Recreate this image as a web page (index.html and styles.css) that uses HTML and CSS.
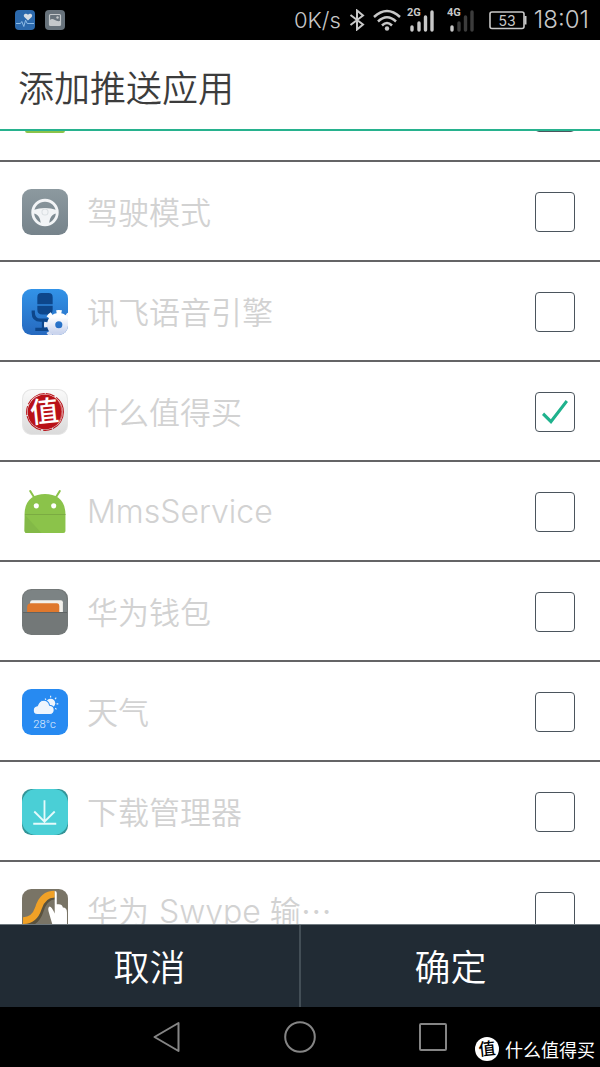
FILE: index.html
```html
<!DOCTYPE html>
<html lang="zh-CN">
<head>
<meta charset="utf-8">
<meta name="viewport" content="width=device-width, initial-scale=1">
<title>添加推送应用</title>
<link rel="stylesheet" href="styles.css">
</head>
<body>
<div class="screen">
  <div class="status">
    <div class="status-group notices">
      <svg class="notice" viewBox="0 0 20 20" aria-hidden="true"><rect width="20" height="20" rx="4" fill="#2c69ac"/><path d="M13 10.500 9.300 7C7.500 4.500 11 2.500 13 4.700c2-2.200 5.400-.2 3.700 2.300z" fill="#d5dce4"/><path d="M1 13.500h4.500l1.300-2 2 5 1.800-6.300 1.600 3.300H19" fill="none" stroke="#8ebbe6" stroke-width="1"/></svg>
      <svg class="notice" viewBox="0 0 20 20" aria-hidden="true"><rect width="20" height="20" rx="4" fill="#67727b"/><rect x="4.500" y="4.500" width="11" height="11" rx="1" fill="none" stroke="#c4c8cb" stroke-width="1.200"/><path d="M5 10c3-3 5 2 10 1v4H5z" fill="#c4c8cb"/><circle cx="12.500" cy="7.500" r="1.200" fill="#c4c8cb"/></svg>
    </div>
    <div class="status-group">
      <span class="status-text">0K/s</span>
      <svg class="bluetooth" viewBox="0 0 16 22" aria-hidden="true"><path d="M1.500 6 14 15.500 8 20.500V1.500L14 6.500 1.500 16" fill="none" stroke="#c8c8c8" stroke-width="2"/></svg>
      <svg class="wifi" viewBox="0 0 28 22" aria-hidden="true"><g fill="none" stroke="#c8c8c8" stroke-width="2.500"><path d="M1 8q13-12 26 0"/><path d="M5 12.500q9-8.500 18 0"/><path d="M9 16.500q5-5 10 0"/></g><circle cx="14" cy="19.500" r="2.200" fill="#c8c8c8"/></svg>
      <svg class="signal" viewBox="0 0 30 26" aria-hidden="true"><text class="net" x="0" y="10">2G</text><path d="M5 21v3M12 17v7M18.500 11v13M25 6v18" stroke="#c8c8c8" stroke-width="3.400" stroke-linecap="round"/></svg>
      <svg class="signal second" viewBox="0 0 30 26" aria-hidden="true"><text class="net" x="0" y="10">4G</text><path d="M5 21v3" stroke="#c8c8c8" stroke-width="3.400" stroke-linecap="round"/><path d="M12 17v7M18.500 11v13M25 6v18" stroke="#3c3c3c" stroke-width="3.400" stroke-linecap="round"/></svg>
      <svg class="battery" viewBox="0 0 38 20" aria-hidden="true"><rect x="1" y="2" width="34" height="16.500" rx="2" fill="none" stroke="#c8c8c8" stroke-width="1.600"/><path d="M36.500 6v8.500" stroke="#c8c8c8" stroke-width="2"/><text class="charge" x="18" y="15.500">53</text></svg>
      <span class="status-text clock">18:01</span>
    </div>
  </div>

  <header class="header"><h1 class="title">添加推送应用</h1></header>

  <main class="viewport">
    <div class="list">
      <label class="row">
        <svg class="icon" viewBox="0 0 45 45" aria-hidden="true"><path d="M3 23h39v18q0 2-2 2H5q-2 0-2-2z" fill="#8bc34a"/></svg>
        <span class="name"></span><input class="check" type="checkbox">
      </label>
      <label class="row">
        <svg class="icon" viewBox="0 0 45 45" aria-hidden="true"><defs><linearGradient id="steel" x2="0" y2="1"><stop stop-color="#8c999f"/><stop offset="1" stop-color="#76838b"/></linearGradient></defs><rect width="45" height="45" rx="9" fill="url(#steel)"/><circle cx="22.500" cy="23" r="12" fill="none" stroke="#f2f4f6" stroke-width="2.800"/><path d="M11 20.500q11.500-4 23 0v3.500c-5 .5-7 4-7.500 11h-8c-.5-7-2.500-10.500-7.500-11z" fill="#f2f4f6"/><circle cx="22.500" cy="22.500" r="3" fill="none" stroke="#dadfe2" stroke-width="1"/></svg>
        <span class="name">驾驶模式</span><input class="check" type="checkbox">
      </label>
      <label class="row">
        <svg class="icon" viewBox="0 0 45 45" aria-hidden="true"><defs><linearGradient id="blue" x2="0" y2="1"><stop stop-color="#3293e8"/><stop offset="1" stop-color="#2669bf"/></linearGradient><linearGradient id="gear" x2="0" y2="1"><stop stop-color="#fff"/><stop offset="1" stop-color="#cbd5ee"/></linearGradient><clipPath id="tile"><rect width="45" height="45" rx="9"/></clipPath></defs><g clip-path="url(#tile)"><rect width="45" height="45" fill="url(#blue)"/><path d="M15 15V8q0-4 4-4h7q4 0 4 4v7zM15 16.500h15V20q0 5-5 5h-5q-5 0-5-5z" fill="#0d468b"/><path d="M11 21v2q0 7.500 7 7.500h8M21 30v8M13 39.500h14" fill="none" stroke="#0d468b" stroke-width="3.200"/><circle cx="36" cy="35" r="12" fill="none" stroke="url(#gear)" stroke-width="5" stroke-dasharray="4.700 4.725" transform="rotate(-12 36 35)"/><circle cx="36" cy="35" r="7.500" fill="none" stroke="url(#gear)" stroke-width="8"/></g></svg>
        <span class="name">讯飞语音引擎</span><input class="check" type="checkbox">
      </label>
      <label class="row">
        <svg class="icon" viewBox="0 0 45 45" aria-hidden="true"><defs><linearGradient id="paper" x2="0" y2="1"><stop stop-color="#fafafa"/><stop offset="1" stop-color="#dadada"/></linearGradient></defs><rect x=".5" y=".5" width="44" height="44" rx="9" fill="url(#paper)" stroke="#e5e5e5"/><circle cx="22.500" cy="22.500" r="17" fill="#b91118"/><circle cx="22.500" cy="22.500" r="18" fill="none" stroke="#b91118" stroke-width="1" stroke-dasharray="20 1 9 2"/><path d="M36 12q6 10 0 21" fill="none" stroke="#e28b8b" stroke-width=".7"/><text class="stamp" x="22" y="32" transform="rotate(-6 22 23)">值</text></svg>
        <span class="name">什么值得买</span><input class="check" type="checkbox" checked>
      </label>
      <label class="row">
        <svg class="icon" viewBox="0 0 45 45" aria-hidden="true"><path d="m8 2 5 8M37 2l-5 8" stroke="#8bc34a" stroke-width="2" stroke-linecap="round"/><path d="M2.500 25C2.500 11 11 5 22.500 5s20 6 20 20v16q0 2-2 2h-36q-2 0-2-2z" fill="#8bc34a"/><path d="M3 25.500 19 43H4.500q-2 0-2-2z" fill="#83b947"/><path d="M3 25h39.500" stroke="#7bab42"/><circle cx="14" cy="16.500" r="2.500" fill="#fff"/><circle cx="31" cy="16.500" r="2.500" fill="#fff"/></svg>
        <span class="name"><span class="latin">MmsService</span></span><input class="check" type="checkbox">
      </label>
      <label class="row">
        <svg class="icon" viewBox="0 0 45 45" aria-hidden="true"><rect width="45" height="45" rx="9" fill="#737878"/><path d="M1 22.500h43V14q0-13-9-13H10Q1 1 1 10z" fill="#7c8384"/><path d="M8 15v-2q0-2 2-2h28q2 0 2 2v10H8z" fill="#f2f1ec"/><path d="M5 23v-5q0-4 4-4h25q2.500 0 2.500 3v6z" fill="#df782d"/><path d="M1 23h43" stroke="#5f6464"/></svg>
        <span class="name">华为钱包</span><input class="check" type="checkbox">
      </label>
      <label class="row">
        <svg class="icon" viewBox="0 0 45 45" aria-hidden="true"><rect width="45" height="45" rx="9" fill="#278af1"/><circle cx="28" cy="14" r="4.500" fill="#eef5fd"/><path d="m22.500 9.500 1 1M28 6.500v1.700M33.500 8.500l-1.200 1.300M35.500 14.500h-1.700M33.700 20l-1.200-1.200" stroke="#eef5fd" stroke-width="1.100"/><path d="M15 25q-4 0-4-4t4-4.500q2-6 7-5.500 4 .5 5 5 4.500.5 4.500 4.500T27.500 25z" fill="#eef5fd" stroke="#278af1" stroke-width="1"/><text class="degrees" x="22" y="38">28°c</text></svg>
        <span class="name">天气</span><input class="check" type="checkbox">
      </label>
      <label class="row">
        <svg class="icon" viewBox="0 0 45 45" aria-hidden="true"><rect width="45" height="45" rx="9" fill="#329497"/><rect width="45" height="45" rx="14" fill="#4acfd6"/><path d="M22 11v20M12 22l10 10 10-10M11 34h22.500" fill="none" stroke="#e5fafb" stroke-width="1.800"/></svg>
        <span class="name">下载管理器</span><input class="check" type="checkbox">
      </label>
      <label class="row">
        <svg class="icon" viewBox="0 0 45 45" aria-hidden="true"><rect width="45" height="45" rx="9" fill="#797466"/><path d="M1 33.500q12 0 16-12Q21 7 32 6" fill="none" stroke="#59523f" stroke-width="8"/><path d="M1 31q11 0 15-12Q20 5 32 5" fill="none" stroke="#f0a127" stroke-width="6.500"/><path d="M32 2q2 0 2 2v11q5-1 6 3 4 0 4 5v15l-4 7h-7q-3-9-7-23-1-4 1-5 2 0 5 7V2z" fill="#fff"/></svg>
        <span class="name">华为 <span class="latin swype">Swype</span> 输<span class="dots">⋯</span></span><input class="check" type="checkbox">
      </label>
    </div>
  </main>

  <div class="actions">
    <button class="action" type="button">取消</button>
    <button class="action" type="button">确定</button>
  </div>

  <nav class="nav">
    <button class="nav-button" type="button" aria-label="返回"><svg class="nav-icon" viewBox="0 0 32 32" aria-hidden="true"><path d="M3.500 16 27.500 2v28z" fill="none" stroke="#858585" stroke-width="2" stroke-linejoin="round"/></svg></button>
    <button class="nav-button" type="button" aria-label="主屏幕"><svg class="nav-icon" viewBox="0 0 32 32" aria-hidden="true"><circle cx="16" cy="16" r="14.800" fill="none" stroke="#858585" stroke-width="2"/></svg></button>
    <button class="nav-button" type="button" aria-label="最近任务"><svg class="nav-icon" viewBox="0 0 32 32" aria-hidden="true"><rect x="3" y="3" width="26" height="26" rx="1" fill="none" stroke="#858585" stroke-width="2"/></svg></button>
    <div class="watermark">
      <svg class="badge" viewBox="0 0 24 24" aria-hidden="true"><circle cx="12" cy="12" r="12" fill="#fff"/><text class="badge-text" x="12" y="18" transform="rotate(-6 12 12)">值</text></svg>
      <span>什么值得买</span>
    </div>
  </nav>
</div>
</body>
</html>
```
FILE: styles.css
```css
* { box-sizing: border-box; }

body {
  margin: 0;
  background: #fff;
  font-family: "Noto Sans CJK SC", sans-serif;
  font-weight: 350;
}

.screen {
  display: flex;
  flex-direction: column;
  height: 100vh;
}

.status {
  display: flex;
  justify-content: space-between;
  align-items: center;
  flex: none;
  height: 40px;
  padding: 0 11px 0 15px;
  background: #000;
  color: #c8c8c8;
}

.status-group {
  display: flex;
  align-items: center;
}

.notices { gap: 10px; }
.notice { width: 20px; height: 20px; }

.status-text {
  font-family: Inter, "Liberation Sans", sans-serif;
  font-size: 22px;
  font-weight: 300;
  line-height: 40px;
}

.clock { font-size: 24px; }

.bluetooth { width: 16px; height: 22px; margin-left: 8px; }
.wifi { width: 28px; height: 22px; margin-left: 8px; }
.signal { width: 30px; height: 26px; margin: 0 0 3px 6px; }
.second { margin-left: 10px; }
.battery { width: 38px; height: 20px; margin: 0 7px 0 12px; }

.net {
  font: 700 11px Roboto, sans-serif;
  fill: #c8c8c8;
}

.charge {
  font: 400 14px Inter, sans-serif;
  fill: #c8c8c8;
  text-anchor: middle;
}

.header {
  flex: none;
  padding: 20px 18px 17px;
  border-bottom: 2px solid #27b28e;
}

.title {
  margin: 0;
  color: #3c3c3c;
  font-size: 36px;
  font-weight: 350;
  line-height: 52px;
}

.viewport {
  flex: 1;
  min-height: 0;
  overflow: hidden;
}

/* The list rests part-way through its first row. */
.list { margin-top: -69px; }

.row {
  display: flex;
  align-items: center;
  height: 100px;
  padding: 2px 25px 0 22px;
  border-bottom: 2px solid #646466;
}

.icon { flex: none; width: 46px; height: 46px; }

.name {
  flex: 1;
  margin-left: 19px;
  padding-bottom: 2px;
  color: #d2d2d2;
  font-size: 31px;
  line-height: 46px;
  white-space: nowrap;
}

.latin {
  font-family: Inter, "Liberation Sans", sans-serif;
  font-size: 32px;
  font-weight: 300;
}

.swype { margin: 0 2px 0 3px; }

.check {
  flex: none;
  display: grid;
  place-items: center;
  width: 40px;
  height: 40px;
  margin: 0;
  appearance: none;
  border: 1px solid #4b555d;
  border-radius: 4px;
  background: #fff;
}

.check:checked::before {
  content: "";
  width: 26px;
  height: 24px;
  background: #1fb28d;
  clip-path: polygon(0 62%, 8% 52%, 34% 80%, 91% 0, 100% 8%, 35% 100%);
}

.stamp {
  font: 500 28px "Noto Sans CJK SC", sans-serif;
  fill: #fff;
  text-anchor: middle;
}

.degrees {
  font: 300 11px Roboto, sans-serif;
  fill: #e3f0fd;
  text-anchor: middle;
}

.actions {
  display: flex;
  flex: none;
  border-top: 1px solid #707a80;
  background: #212b34;
}

.action {
  flex: 1;
  padding: 14px 0 16px;
  border: 0;
  background: none;
  color: #fff;
  font: inherit;
  font-size: 36px;
  line-height: 52px;
}

.action + .action { border-left: 2px solid #434e56; }

.nav {
  position: relative;
  display: flex;
  flex: none;
  justify-content: center;
  height: 60px;
  background: #000;
}

.nav-button {
  display: grid;
  place-items: center;
  width: 133px;
  padding: 0;
  border: 0;
  background: none;
}

.nav-icon { width: 32px; height: 32px; }

.watermark {
  position: absolute;
  right: 5px;
  bottom: 6px;
  display: flex;
  align-items: center;
  gap: 6px;
  color: #fff;
  font-size: 18px;
  font-weight: 400;
  line-height: 24px;
}

.badge { width: 24px; height: 24px; }

.badge-text {
  font: 500 17px "Noto Sans CJK SC", sans-serif;
  fill: #000;
  text-anchor: middle;
}
```
